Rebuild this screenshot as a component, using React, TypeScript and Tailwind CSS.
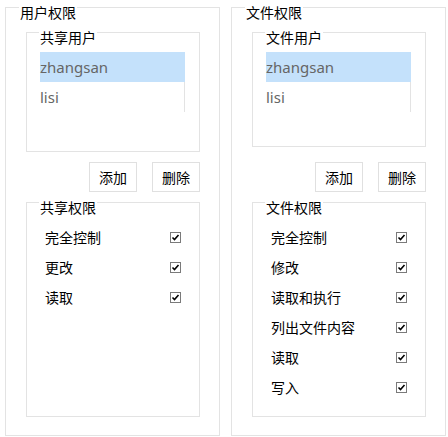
import React from "react";

const FONT = { fontFamily: '"Noto Sans", "Noto Sans CJK SC", sans-serif' };

function Check() {
  return (
    <span className="flex w-[11px] h-[11px] items-center justify-center border border-[#7a7a7a] bg-white">
      <svg width="9" height="9" viewBox="0 0 9 9">
        <path d="M1.5 4.5 L3.5 6.5 L7.5 2" fill="none" stroke="#000" strokeWidth="1.6" />
      </svg>
    </span>
  );
}

function Panel({
  title,
  userTitle,
  permTitle,
  perms,
  topH,
  btnMt,
}: {
  title: string;
  userTitle: string;
  permTitle: string;
  perms: string[];
  topH: string;
  btnMt: string;
}) {
  return (
    <div className="relative w-[215px] h-[429px] border border-[#e3e3e3] pt-[24px] pl-[20px]">
      <span className="absolute left-[13px] top-[-2px] bg-white px-[1px] text-[14px] leading-[14px] text-black">
        {title}
      </span>
      <div className={`relative w-[174px] ${topH} border border-[#e3e3e3] pt-[19px] pl-[13px]`}>
        <span className="absolute left-[12px] top-[-2px] bg-white px-[1px] text-[14px] leading-[14px] text-black">
          {userTitle}
        </span>
        <div className="w-[145px] h-[60px] flex flex-col">
          <div className="h-[30px] flex items-center bg-[#c4e1fb] text-[15px] text-[#666]">zhangsan</div>
          <div className="h-[30px] flex items-center border-r border-[#e3e3e3] text-[15px] text-[#666]">lisi</div>
        </div>
      </div>
      <div className={`w-[174px] flex justify-end gap-[15px] ${btnMt}`}>
        <button className="w-[48px] h-[30px] border border-[#e0e0e0] bg-white text-[14px] text-black flex items-center justify-center">
          添加
        </button>
        <button className="w-[48px] h-[30px] border border-[#e0e0e0] bg-white text-[14px] text-black flex items-center justify-center">
          删除
        </button>
      </div>
      <div className="relative mt-[10px] w-[174px] h-[215px] border border-[#e3e3e3] pt-[19px] pl-[18px]">
        <span className="absolute left-[12px] top-[-2px] bg-white px-[1px] text-[14px] leading-[14px] text-black">
          {permTitle}
        </span>
        <div className="flex flex-col">
          {perms.map((p) => (
            <div key={p} className="h-[30px] flex items-center">
              <span className="w-[125px] text-[14px] text-black">{p}</span>
              <Check />
            </div>
          ))}
        </div>
      </div>
    </div>
  );
}

export default function App() {
  return (
    <div className="w-[448px] h-[437px] bg-white flex gap-[11px] pl-[5px] pt-[7px]" style={FONT}>
      <Panel
        title="用户权限"
        userTitle="共享用户"
        permTitle="共享权限"
        perms={["完全控制", "更改", "读取"]}
        topH="h-[120px]"
        btnMt="mt-[10px]"
      />
      <Panel
        title="文件权限"
        userTitle="文件用户"
        permTitle="文件权限"
        perms={["完全控制", "修改", "读取和执行", "列出文件内容", "读取", "写入"]}
        topH="h-[115px]"
        btnMt="mt-[15px]"
      />
    </div>
  );
}
